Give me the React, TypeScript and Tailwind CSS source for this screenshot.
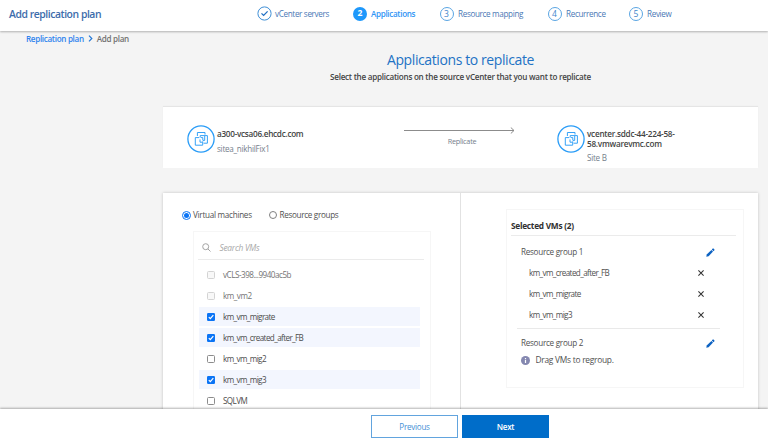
import React from "react";

type VM = { name: string; checked?: boolean; disabled?: boolean };

const vms: VM[] = [
  { name: "vCLS-398...9940ac5b", disabled: true },
  { name: "km_vm2", disabled: true },
  { name: "km_vm_migrate", checked: true },
  { name: "km_vm_created_after_FB", checked: true },
  { name: "km_vm_mig2" },
  { name: "km_vm_mig3", checked: true },
  { name: "SQLVM" },
];

const selected = ["km_vm_created_after_FB", "km_vm_migrate", "km_vm_mig3"];

function StepCircle({ n, state }: { n: number; state: "done" | "active" | "todo" }) {
  if (state === "done") {
    return (
      <svg className="size-[15px] shrink-0" viewBox="0 0 15 15" fill="none">
        <circle cx="7.5" cy="7.5" r="6.6" stroke="#3f8fd6" strokeWidth="1" />
        <path d="M4.5 7.4 6.6 9.4 10.6 5.4" stroke="#1f6fc4" strokeWidth="1.3" />
      </svg>
    );
  }
  return (
    <span
      className={
        state === "active"
          ? "flex size-[14px] shrink-0 items-center justify-center rounded-full bg-[#1e98fb] text-[8.5px] leading-none font-bold tracking-normal text-white"
          : "flex size-[14px] shrink-0 items-center justify-center rounded-full border border-[#5aa5e3] pt-px text-[8.5px] leading-none tracking-normal text-[#3f86cc]"
      }
    >
      {n}
    </span>
  );
}

function SiteIcon() {
  return (
    <svg className="size-[28px] shrink-0" viewBox="0 0 28 28" fill="none" stroke="#2b9df7">
      <circle cx="14" cy="14" r="13.1" strokeWidth="1.3" />
      <g strokeWidth="0.95">
        <path d="M10.4 11V7.5H18V9.6" />
        <path d="M13.2 12.6V10.6H20.4V18.2H16.6" />
        <path d="M12.2 12.6H8.3V20.2H15.7V16.4" />
        <path d="M14 12.6H15.8V15.2M17.7 11V15.4H15.8M13 14.4V17.2H15.4" />
      </g>
    </svg>
  );
}

function Checkbox({ checked, disabled }: { checked?: boolean; disabled?: boolean }) {
  if (checked) {
    return (
      <svg className="size-[8px] shrink-0" viewBox="0 0 8 8" fill="none">
        <rect width="8" height="8" rx="1.2" fill="#0b74f5" />
        <path d="M1.8 4.2 3.3 5.7 6.3 2.2" stroke="#fff" strokeWidth="1.2" />
      </svg>
    );
  }
  return (
    <span
      className={
        disabled
          ? "size-[8px] shrink-0 rounded-[1.5px] border border-[#d3d3d3] bg-[#f8f8f8]"
          : "size-[8px] shrink-0 rounded-[1.5px] border border-[#8c8c8c] bg-white"
      }
    />
  );
}

function Pencil() {
  return (
    <svg className="mr-px size-[9px] shrink-0" viewBox="0 0 9 9" fill="#0c62c2">
      <path d="M0.3 8.7 0.7 6.4 5.4 2 7 3.6 2.6 8.3Z" />
      <path d="M5.8 1.5 6.7 0.6Q7.2 0.2 7.6 0.6L8.4 1.4Q8.8 1.9 8.4 2.3L7.5 3.2Z" />
    </svg>
  );
}

function Cross() {
  return (
    <svg className="size-[6px] shrink-0" viewBox="0 0 6 6" stroke="#333" strokeWidth="1.05">
      <path d="M0.4 0.4 5.6 5.6M5.6 0.4 0.4 5.6" />
    </svg>
  );
}

export default function App() {
  return (
    <div className="flex h-[443px] w-[768px] flex-col overflow-hidden bg-[#f4f4f4] font-['Open_Sans','Noto_Sans',sans-serif] text-[8.1px] leading-[10px] tracking-[-0.26px] whitespace-nowrap text-[#505050]">
      <header className="z-10 flex h-[31px] shrink-0 items-start bg-white pt-[6px] shadow-[0_1px_2px_rgba(0,0,0,0.28)]">
        <h1 className="ml-[9px] w-[247.5px] text-[10.4px] leading-4 font-semibold tracking-[-0.45px] text-[#3c6cab]">Add replication plan</h1>
        <nav className="flex h-[15px] items-center tracking-[-0.33px] text-[#4a78b5]">
          <div className="flex w-[96.5px] items-center gap-[3.5px]">
            <StepCircle n={1} state="done" />
            <span>vCenter servers</span>
          </div>
          <div className="flex w-[86.5px] items-center gap-[4px]">
            <StepCircle n={2} state="active" />
            <span className="font-semibold text-[#2f95f5]">Applications</span>
          </div>
          <div className="flex w-[108px] items-center gap-[4.5px]">
            <StepCircle n={3} state="todo" />
            <span>Resource mapping</span>
          </div>
          <div className="flex w-[81.5px] items-center gap-[4.5px]">
            <StepCircle n={4} state="todo" />
            <span>Recurrence</span>
          </div>
          <div className="flex items-center gap-[4px]">
            <StepCircle n={5} state="todo" />
            <span>Review</span>
          </div>
        </nav>
      </header>

      <main className="flex min-h-0 flex-1 flex-col overflow-hidden">
        <div className="mt-[2px] ml-[26px] flex h-[11px] shrink-0 items-center font-semibold tracking-[-0.32px] text-[#727272]">
          <span className="text-[#2f83ee]">Replication plan</span>
          <svg className="mx-[4px] h-[7px] w-[5px]" viewBox="0 0 5 7" fill="none" stroke="#2277d6" strokeWidth="1.2">
            <path d="M1 0.7 3.8 3.5 1 6.3" />
          </svg>
          <span>Add plan</span>
        </div>

        <div className="ml-[163px] flex w-[595px] shrink-0 flex-col items-center pt-[6px]">
          <h2 className="text-[14px] leading-5 tracking-[-0.4px] text-[#2272c4]">Applications to replicate</h2>
          <p className="mt-[2px] font-semibold text-[#444]">
            Select the applications on the source vCenter that you want to replicate
          </p>
        </div>

        <section className="mt-[25px] ml-[163px] flex h-[61px] w-[595px] shrink-0 items-start bg-white pt-[18px] shadow-[0_-1px_1px_rgba(0,0,0,0.06)]">
          <div className="ml-6 flex w-[217px] gap-[2px]">
            <SiteIcon />
            <div className="pt-[4px]">
              <p className="text-[8.2px] font-semibold tracking-[-0.29px] text-[#444]">a300-vcsa06.ehcdc.com</p>
              <p className="mt-[5px] text-[#75808c]">sitea_nikhilFix1</p>
            </div>
          </div>
          <div className="flex w-[110px] flex-col items-center">
            <svg className="mt-[2px] h-[7px] w-[111px]" viewBox="0 0 111 7" fill="none" stroke="#8c8c8c">
              <path d="M0 3.5H110" />
              <path d="M106.8 0.5 110 3.5 106.8 6.5" />
            </svg>
            <span className="mt-[2px] ml-[6px] text-[7.3px] text-[#75808c]">Replicate</span>
          </div>
          <div className="ml-[43px] flex gap-[2px]">
            <SiteIcon />
            <div className="pt-[4px]">
              <p className="text-[8.2px] leading-[9.5px] font-semibold text-[#444]">
                vcenter.sddc-44-224-58-
                <br />
                58.vmwarevmc.com
              </p>
              <p className="mt-[5px] text-[#75808c]">Site B</p>
            </div>
          </div>
        </section>

        <section className="mt-[25px] ml-[163px] flex h-[240px] w-[595px] shrink-0 bg-white shadow-[0_0_3px_rgba(0,0,0,0.2)]">
          <div className="w-[298px] border-r border-[#e2e2e2] pt-[17px] pl-[19px]">
            <div className="flex h-[10px] items-center">
              <span className="flex size-[9px] items-center justify-center rounded-full border border-[#0b74f5]">
                <span className="size-[5px] rounded-full bg-[#0b74f5]" />
              </span>
              <span className="ml-[2px] w-[75.5px]">Virtual machines</span>
              <span className="size-[8px] rounded-full border border-[#808080]" />
              <span className="ml-[3px] tracking-[-0.3px]">Resource groups</span>
            </div>
            <div className="mt-[11px] ml-[11px] h-[220px] w-[238px] border border-[#f6f6f6] px-[4px]">
              <div className="flex h-[28px] w-[226px] items-center border-b border-[#ebebeb] pt-[4px] pl-[4px]">
                <svg className="size-[9px]" viewBox="0 0 9 9" fill="none" stroke="#a3a3a3" strokeWidth="1">
                  <circle cx="3.7" cy="3.7" r="3" />
                  <path d="M5.9 5.9 8.5 8.5" />
                </svg>
                <span className="ml-[8.5px] text-[8.4px] text-[#a8a8a8] italic">Search VMs</span>
              </div>
              <ul className="mt-[5px] ml-[1px] flex w-[221px] flex-col gap-[2px]">
                {vms.map((vm) => (
                  <li
                    key={vm.name}
                    className={
                      vm.checked
                        ? "flex h-[19px] items-center gap-[8px] bg-[#f3f6fe] pl-[8px]"
                        : "flex h-[19px] items-center gap-[8px] pl-[8px]"
                    }
                  >
                    <Checkbox checked={vm.checked} disabled={vm.disabled} />
                    <span
                      className={
                        vm.disabled
                          ? "tracking-[-0.48px] text-[#747474]"
                          : "tracking-[-0.6px] text-[#4c4c4c]"
                      }
                    >
                      {vm.name}
                    </span>
                  </li>
                ))}
              </ul>
            </div>
          </div>

          <div className="pt-[16px] pl-[45px]">
            <div className="h-[179px] w-[238px] border border-[#f6f6f6] pl-[4px]">
              <h3 className="flex h-[26px] w-[225px] items-center border-b border-[#ebebeb] pt-[6px] text-[8.3px] font-bold text-[#303030]">
                Selected VMs (2)
              </h3>
              <div className="mt-[11px] ml-[10px] flex h-[10px] w-[195px] items-center justify-between">
                <span>Resource group 1</span>
                <Pencil />
              </div>
              <ul className="mt-[11px] ml-[18px] flex w-[175px] flex-col gap-[11px]">
                {selected.map((name) => (
                  <li key={name} className="flex h-[10px] items-center justify-between">
                    <span className="tracking-[-0.6px]">{name}</span>
                    <Cross />
                  </li>
                ))}
              </ul>
              <div className="mt-[8px] ml-[6px] w-[203px] border-b border-[#e9e9e9]" />
              <div className="mt-[9px] ml-[10px] flex h-[10px] w-[195px] items-center justify-between">
                <span>Resource group 2</span>
                <Pencil />
              </div>
              <div className="mt-[7px] ml-[10px] flex h-[10px] items-center gap-[5.5px]">
                <svg className="size-[9px]" viewBox="0 0 9 9">
                  <circle cx="4.5" cy="4.5" r="4.5" fill="#8588b0" />
                  <path d="M3.9 2h1.2v1.1H3.9zM3.9 3.8h1.2v3.2H3.9z" fill="#fff" />
                </svg>
                <span className="text-[8.4px]">Drag VMs to regroup.</span>
              </div>
            </div>
          </div>
        </section>
      </main>

      <footer className="z-10 flex h-[34px] shrink-0 items-start gap-[4px] bg-white pt-[6px] pl-[371px] shadow-[0_-1px_2px_rgba(0,0,0,0.3)]">
        <button className="h-[23px] w-[87px] border border-[#62a4de] bg-white text-[#4591d6]">Previous</button>
        <button className="h-[23px] w-[87px] bg-[#006dc9] font-semibold text-white">Next</button>
      </footer>
    </div>
  );
}
